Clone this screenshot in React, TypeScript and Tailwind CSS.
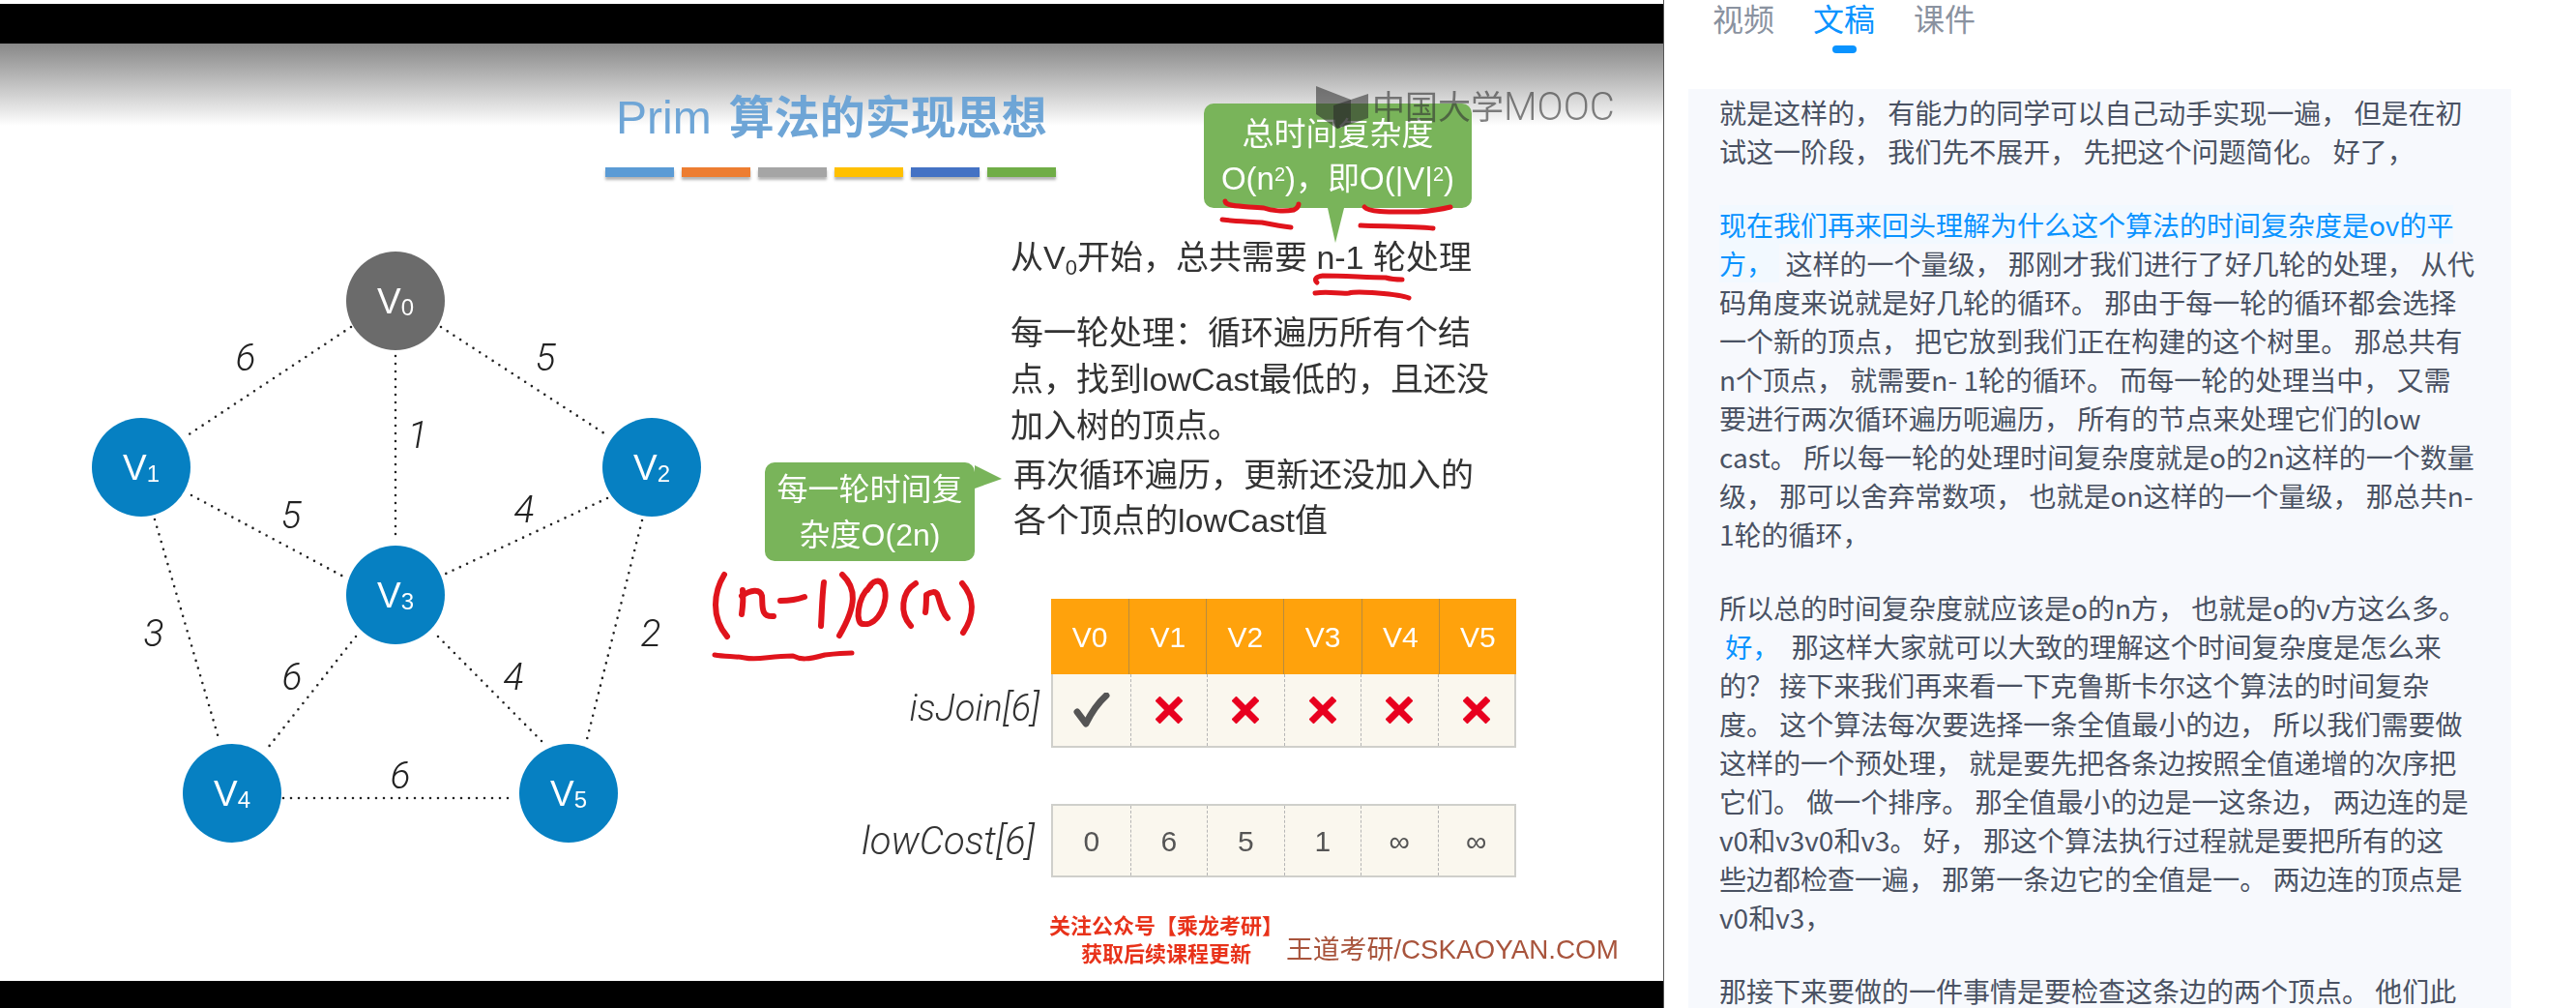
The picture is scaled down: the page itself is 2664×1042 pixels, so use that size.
import React from 'react';

const sans = "font-['Liberation_Sans','Noto_Sans_CJK_SC',sans-serif]";

const nodes = [
  { id: 'v0', sub: '0', pos: 'left-[358px] top-[260px]', color: 'bg-[#6b6b6b]' },
  { id: 'v1', sub: '1', pos: 'left-[95px] top-[432px]', color: 'bg-[#0680c2]' },
  { id: 'v2', sub: '2', pos: 'left-[623px] top-[432px]', color: 'bg-[#0680c2]' },
  { id: 'v3', sub: '3', pos: 'left-[358px] top-[564px]', color: 'bg-[#0680c2]' },
  { id: 'v4', sub: '4', pos: 'left-[189px] top-[769px]', color: 'bg-[#0680c2]' },
  { id: 'v5', sub: '5', pos: 'left-[537px] top-[769px]', color: 'bg-[#0680c2]' },
];

const edges = [
  [363, 338, 194, 450],
  [456, 338, 628, 450],
  [409, 368, 409, 557],
  [198, 512, 359, 598],
  [628, 515, 459, 594],
  [160, 537, 226, 763],
  [664, 538, 606, 768],
  [368, 658, 277, 773],
  [453, 658, 564, 770],
  [293, 825, 528, 825],
];

const weights = [
  { text: '6', pos: 'left-[254px] top-[370px]' },
  { text: '5', pos: 'left-[564px] top-[370px]' },
  { text: '1', pos: 'left-[432px] top-[450px]' },
  { text: '5', pos: 'left-[301px] top-[533px]' },
  { text: '4', pos: 'left-[542px] top-[527px]' },
  { text: '3', pos: 'left-[159px] top-[655px]' },
  { text: '2', pos: 'left-[673px] top-[655px]' },
  { text: '6', pos: 'left-[302px] top-[700px]' },
  { text: '4', pos: 'left-[531px] top-[700px]' },
  { text: '6', pos: 'left-[414px] top-[802px]' },
];

const barColors = ['bg-[#5b9bd5]', 'bg-[#ed7d31]', 'bg-[#a5a5a5]', 'bg-[#ffc000]', 'bg-[#4472c4]', 'bg-[#70ad47]'];

const inkPaths = [
  // (n-1)O(n)
  'M749 594 C738 612 735 638 752 658',
  'M768 610 C769 620 768 628 767 635',
  'M767 616 C776 610 786 608 788 616 C789 626 786 638 800 637',
  'M807 621 C815 621 824 620 832 617',
  'M852 602 C850 618 850 632 849 647',
  'M871 594 C886 608 886 626 868 657',
  'M900 606 C886 618 884 646 893 645 C908 647 920 622 914 606 C910 597 902 600 897 610',
  'M947 603 C932 612 930 634 942 647',
  'M957 633 C958 626 958 620 958 615 C962 612 968 610 970 616 C973 626 975 634 980 639',
  'M995 603 C1008 618 1008 636 996 654',
  'M739 677 C750 679 760 678 770 680 C785 683 795 678 820 678 C828 682 835 682 853 677 C862 676 872 675 881 675',
  // callout underlines
  'M1267 208 C1268 214 1285 213 1307 215 C1315 218 1328 219 1338 217 C1342 215 1343 212 1343 211',
  'M1264 227 C1278 229 1292 229 1305 230 C1315 232 1325 234 1335 235',
  'M1411 214 C1416 220 1440 219 1467 219 C1480 218 1492 216 1500 214',
  'M1407 233 C1430 234 1460 234 1482 236',
  // n-1 underlines
  'M1362 292 C1358 288 1362 286 1368 285 C1390 285 1415 287 1433 287 C1440 289 1445 289 1450 289',
  'M1360 303 C1375 301 1385 304 1395 303 C1402 301 1410 302 1425 303 C1438 304 1450 305 1457 308',
];

const Cross = () => (
  <svg width="28" height="28" viewBox="0 0 28 28" fill="none" stroke="#e8001f" strokeWidth="7">
    <path d="M2 2 L26 26 M26 2 L2 26" />
  </svg>
);

const Check = () => (
  <svg width="38" height="36" viewBox="0 0 38 36" fill="none" stroke="#555" strokeWidth="7" strokeLinecap="round" strokeLinejoin="round">
    <path d="M4 20 L13 32 C18 22 24 12 34 3" />
  </svg>
);

const Slot = ({ children }: { children: React.ReactNode }) => (
  <div className="flex items-center justify-center border-l border-dashed border-[#b5b5b5] first:border-l-0">{children}</div>
);

const Sup = ({ children }: { children: React.ReactNode }) => (
  <span className="relative -top-[9px] text-[20px]">{children}</span>
);

const Blue = ({ children }: { children: React.ReactNode }) => (
  <span className="bg-[#f2f9ff] text-[#0a93ff]">{children}</span>
);

const transcript: React.ReactNode[][] = [
  [
    '就是这样的， 有能力的同学可以自己动手实现一遍， 但是在初',
    '试这一阶段， 我们先不展开， 先把这个问题简化。 好了，',
  ],
  [
    <Blue>现在我们再来回头理解为什么这个算法的时间复杂度是ov的平</Blue>,
    <>
      <Blue>方， </Blue> 这样的一个量级， 那刚才我们进行了好几轮的处理， 从代
    </>,
    '码角度来说就是好几轮的循环。 那由于每一轮的循环都会选择',
    '一个新的顶点， 把它放到我们正在构建的这个树里。 那总共有',
    'n个顶点， 就需要n- 1轮的循环。 而每一轮的处理当中， 又需',
    '要进行两次循环遍历呃遍历， 所有的节点来处理它们的low',
    'cast。 所以每一轮的处理时间复杂度就是o的2n这样的一个数量',
    '级， 那可以舍弃常数项， 也就是on这样的一个量级， 那总共n-',
    '1轮的循环，',
  ],
  [
    '所以总的时间复杂度就应该是o的n方， 也就是o的v方这么多。',
    <>
      {' '}
      <span className="text-[#0a93ff]">好， </span> 那这样大家就可以大致的理解这个时间复杂度是怎么来
    </>,
    '的？ 接下来我们再来看一下克鲁斯卡尔这个算法的时间复杂',
    '度。 这个算法每次要选择一条全值最小的边， 所以我们需要做',
    '这样的一个预处理， 就是要先把各条边按照全值递增的次序把',
    '它们。 做一个排序。 那全值最小的边是一这条边， 两边连的是',
    'v0和v3v0和v3。 好， 那这个算法执行过程就是要把所有的这',
    '些边都检查一遍， 那第一条边它的全值是一。 两边连的顶点是',
    'v0和v3，',
  ],
  ['那接下来要做的一件事情是要检查这条边的两个顶点。 他们此'],
];

export default function App() {
  return (
    <div className={`flex h-[1042px] w-[2664px] overflow-hidden bg-white ${sans}`}>
      {/* video */}
      <section className="relative flex w-[1721px] shrink-0 flex-col border-r border-[#555] pt-1 blur-[0.6px]">
        <div className="h-[41px] bg-black" />
        <div className="flex-1 bg-white">
          <div className="h-[85px] bg-gradient-to-b from-[#888888] to-white" />
        </div>
        <div className="h-[28px] bg-black" />

        {/* slide canvas */}
        <h1 className="absolute left-[637px] top-[92px] flex items-baseline text-[48px] font-normal leading-[60px] text-[#6ea5d6]">
          Prim<span className="ml-[18px] text-[47px] font-bold">算法的实现思想</span>
        </h1>
        <div className="absolute left-[626px] top-[173px] flex gap-[8px]">
          {barColors.map((color) => (
            <div key={color} className={`h-[10px] w-[71px] shadow-[0_3px_3px_rgba(0,0,0,0.3)] ${color}`} />
          ))}
        </div>

        <svg className="absolute left-0 top-0" width="1720" height="1042" fill="none">
          {edges.map(([x1, y1, x2, y2]) => (
            <line key={`${x1}-${y1}`} x1={x1} y1={y1} x2={x2} y2={y2} stroke="#222" strokeWidth="2.6" strokeLinecap="round" strokeDasharray="0 8" />
          ))}
        </svg>

        {nodes.map((node) => (
          <div
            key={node.id}
            className={`absolute flex h-[102px] w-[102px] items-center justify-center rounded-full text-white ${node.pos} ${node.color}`}
          >
            <span className="text-[37px] leading-none">V</span>
            <span className="mt-[14px] text-[24px] leading-none">{node.sub}</span>
          </div>
        ))}

        {weights.map((w) => (
          <span
            key={w.pos}
            className={`absolute -translate-x-1/2 -translate-y-1/2 font-['Roboto',sans-serif] text-[39px] font-light italic leading-none text-[#222] ${w.pos}`}
          >
            {w.text}
          </span>
        ))}

        {/* text on the slide */}
        <div className="absolute left-[1045px] top-[242px] whitespace-pre text-[34px] leading-[48px] text-[#333]">
          从V<span className="relative top-[6px] text-[22px]">0</span>开始，总共需要 n-1 轮处理
        </div>
        <div className="absolute left-[1045px] top-[320px] whitespace-pre text-[34px] leading-[48px] text-[#333]">
          <div>每一轮处理：循环遍历所有个结</div>
          <div>点，找到lowCast最低的，且还没</div>
          <div>加入树的顶点。</div>
        </div>
        <div className="absolute left-[1048px] top-[468px] whitespace-pre text-[34px] leading-[47px] text-[#333]">
          <div>再次循环遍历，更新还没加入的</div>
          <div>各个顶点的lowCast值</div>
        </div>

        {/* callouts */}
        <div className="absolute left-[1245px] top-[107px] flex h-[108px] w-[277px] flex-col items-center rounded-[10px] bg-[#79b45a] pt-[9px] text-[33px] leading-[46px] text-white">
          <div>总时间复杂度</div>
          <div className="whitespace-pre">
            O(n<Sup>2</Sup>)，即O(|V|<Sup>2</Sup>)
          </div>
          <div className="absolute left-[128px] top-[108px] h-[36px] w-[17px] bg-[#79b45a] [clip-path:polygon(0_0,100%_0,47%_100%)]" />
        </div>
        <div className="absolute left-[791px] top-[478px] flex h-[102px] w-[217px] flex-col items-center rounded-[10px] bg-[#79b45a] pt-[5px] text-[32px] leading-[47px] text-white">
          <div>每一轮时间复</div>
          <div>杂度O(2n)</div>
          <div className="absolute left-[217px] top-[3px] h-[24px] w-[28px] bg-[#79b45a] [clip-path:polygon(0_0,100%_58%,0_100%)]" />
        </div>

        {/* MOOC watermark */}
        <div className="absolute left-[1361px] top-[89px] flex items-center text-[#323232]/60">
          <svg className="mr-[4px]" width="54" height="44" viewBox="1361 89 54 44" fill="#282828" fillOpacity="0.55">
            <path d="M1361 89 L1397 103 L1397 127 L1383 133 L1361 118 Z" />
            <path d="M1379 109 L1415 97 L1415 122 L1383 133 L1379 127 Z" />
          </svg>
          <span className="text-[34px] leading-[40px]">中国大学</span>
          <span className="font-['Roboto',sans-serif] text-[40px] font-light leading-[40px]">MOOC</span>
        </div>

        {/* tables */}
        <div className="absolute left-[1087px] top-[619px] w-[481px]">
          <div className="grid h-[78px] grid-cols-6 bg-[#ffa20c] text-[30px] text-white">
            {['V0', 'V1', 'V2', 'V3', 'V4', 'V5'].map((label) => (
              <div key={label} className="flex items-center justify-center border-l border-[#b98b3e] first:border-l-0">
                {label}
              </div>
            ))}
          </div>
          <div className="grid h-[76px] grid-cols-6 border-2 border-t-0 border-[#cfcfcb] bg-[#faf7ee]">
            <Slot>
              <Check />
            </Slot>
            {[1, 2, 3, 4, 5].map((i) => (
              <Slot key={i}>
                <Cross />
              </Slot>
            ))}
          </div>
        </div>
        <div className="absolute left-[1087px] top-[831px] grid h-[76px] w-[481px] grid-cols-6 border-2 border-[#cfcfcb] bg-[#faf7ee] text-[30px] text-[#555]">
          {['0', '6', '5', '1', '∞', '∞'].map((value, i) => (
            <Slot key={i}>{value}</Slot>
          ))}
        </div>
        <span className="absolute right-[645px] top-[709px] font-['Roboto',sans-serif] text-[38px] font-light italic leading-[46px] text-[#333]">
          isJoin[6]
        </span>
        <span className="absolute right-[650px] top-[847px] font-['Roboto',sans-serif] text-[40px] font-light italic leading-[46px] text-[#333]">
          lowCost[6]
        </span>

        {/* footer */}
        <div className="absolute left-[1087px] top-[943px] flex w-[238px] flex-col items-center text-[22px] font-bold leading-[29px] text-[#e8321a]">
          <div className="whitespace-nowrap">关注公众号【乘龙考研】</div>
          <div className="whitespace-nowrap">获取后续课程更新</div>
        </div>
        <span className="absolute left-[1330px] top-[964px] whitespace-nowrap text-[27.8px] leading-[36px] text-[#a8543c]">
          王道考研/CSKAOYAN.COM
        </span>

        {/* pen strokes */}
        <svg className="absolute left-0 top-0" width="1720" height="1042" fill="none" stroke="#e0141c" strokeLinecap="round" strokeLinejoin="round">
          {inkPaths.map((d, i) => (
            <path key={i} d={d} strokeWidth={i < 10 ? 6 : 5} />
          ))}
        </svg>
      </section>

      {/* transcript */}
      <aside className="flex min-w-0 flex-1 flex-col">
        <nav className="flex h-[92px] shrink-0 items-start gap-[40px] pl-[50px] text-[32px] leading-[42px] text-[#8a92a0]">
          <span>视频</span>
          <span className="flex flex-col items-center text-[#0a93ff]">
            文稿
            <span className="mt-[5px] h-2 w-[25px] rounded-full bg-[#0a93ff]" />
          </span>
          <span>课件</span>
        </nav>
        <div className="ml-[25px] w-[851px] flex-1 overflow-hidden bg-[#f7f9fd] pl-[32px] pt-1 font-['Noto_Sans_CJK_SC',sans-serif] text-[28px] leading-[40px] text-[#4a5263]">
          {transcript.map((lines, i) => (
            <div key={i} className="mb-[36px]">
              {lines.map((line, j) => (
                <div key={j} className="whitespace-pre">
                  {line}
                </div>
              ))}
            </div>
          ))}
        </div>
      </aside>
    </div>
  );
}
